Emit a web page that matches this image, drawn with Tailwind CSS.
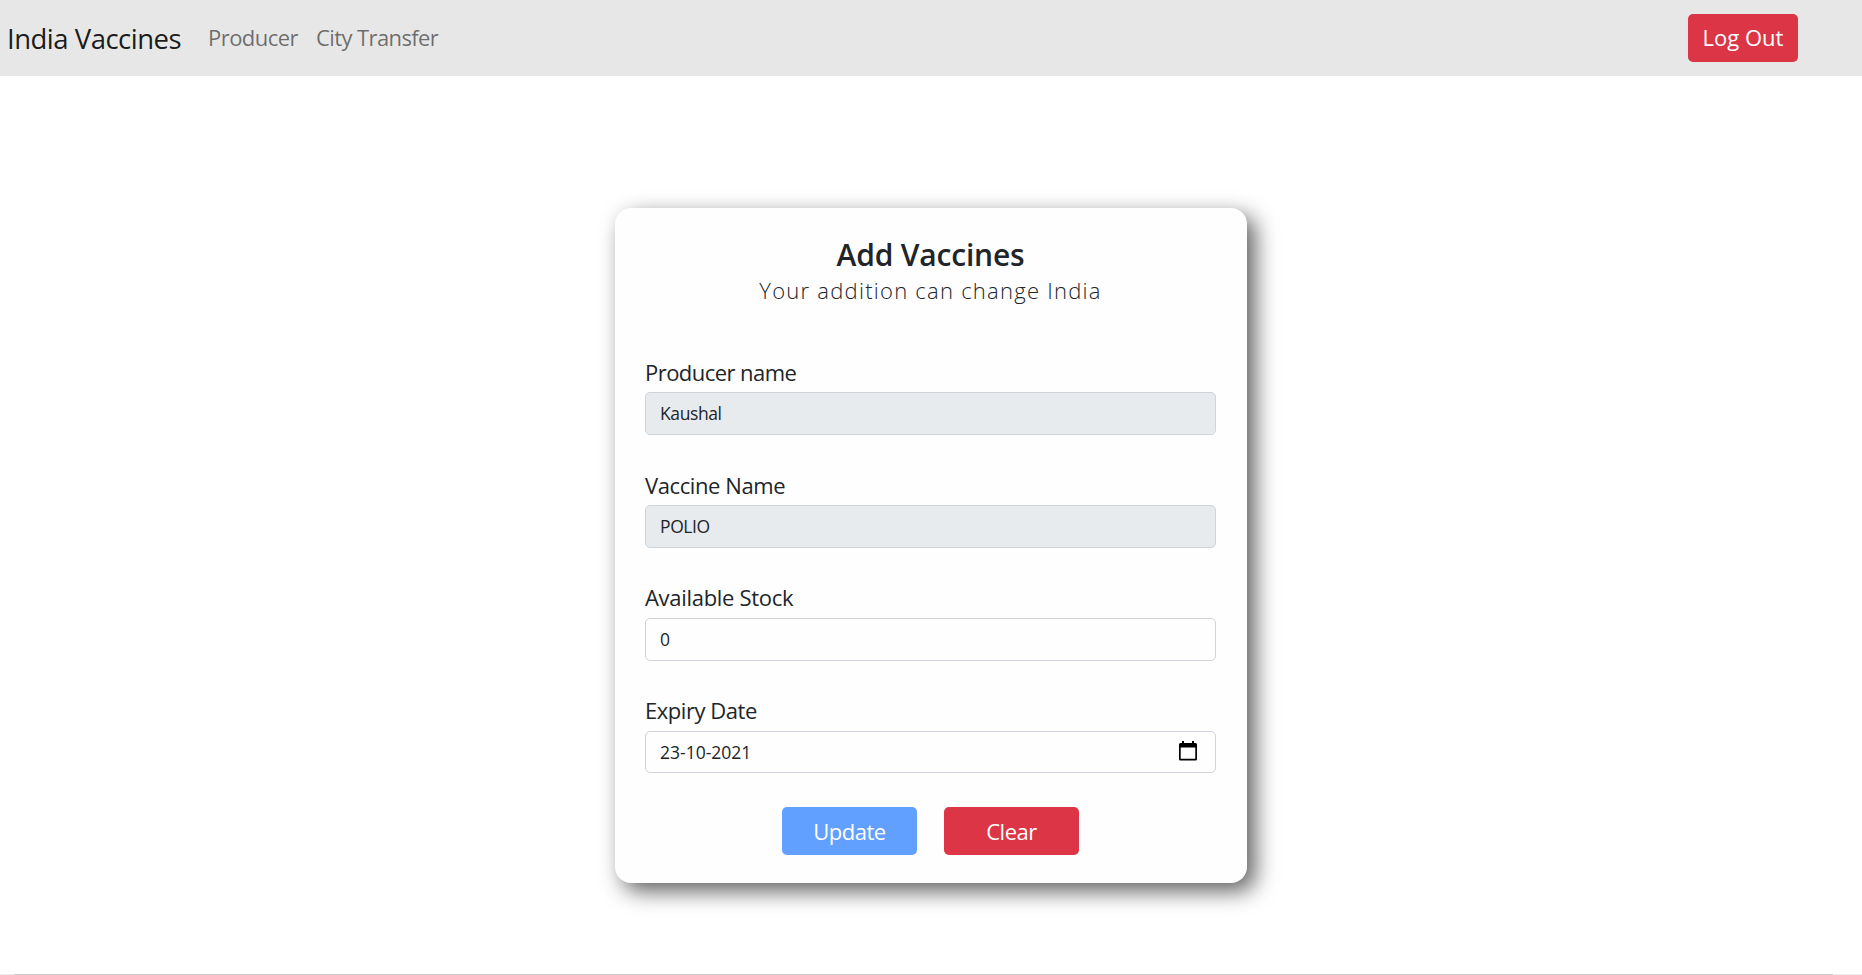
<!DOCTYPE html>
<html lang="en">
<head>
<meta charset="utf-8">
<title>India Vaccines</title>
<script src="https://cdn.jsdelivr.net/npm/@tailwindcss/browser@4"></script>
</head>
<body class="h-[975px] overflow-hidden bg-white font-['Open_Sans','Noto_Sans',sans-serif] text-[#212529] flex flex-col">
<nav class="h-[76px] shrink-0 bg-[#e7e7e7] flex items-center pl-[7px] pr-16">
  <a class="text-[27.5px] leading-10 text-black/90 tracking-[-0.5px] whitespace-nowrap w-[201px] pt-px">India Vaccines</a>
  <a class="text-[22px] tracking-[-0.55px] text-black/55 w-[108px] whitespace-nowrap pb-px">Producer</a>
  <a class="text-[22px] tracking-[-0.6px] text-black/55 whitespace-nowrap pb-px">City Transfer</a>
  <button class="ml-auto w-[110px] h-12 rounded-[5px] bg-[#dc3545] text-white text-[22px] whitespace-nowrap pb-px">Log Out</button>
</nav>
<main class="flex-1 flex flex-col items-center pt-[132px]">
  <form class="w-[632px] h-[675px] rounded-2xl bg-[#fefefe] shadow-[8px_8px_22px_rgba(0,0,0,0.63)] pl-[30px] pr-[31px] pt-7 flex flex-col">
    <h1 class="text-center text-[30px] leading-[38px] font-semibold tracking-[-0.2px]">Add Vaccines</h1>
    <p class="text-center text-[22px] leading-8 font-light tracking-[1.25px]">Your addition can change India</p>
    <div class="mt-[51px] flex flex-col gap-[35px]">
      <div class="h-[78px] flex flex-col justify-between"><label class="text-[22px] tracking-[-0.55px] leading-[31px]">Producer name</label><div class="h-[43px] rounded-[5px] border border-[#ced4da] bg-[#e8ebee] px-3.5 flex items-center text-[17.5px] tracking-[-0.4px]">Kaushal</div></div>
      <div class="h-[78px] flex flex-col justify-between"><label class="text-[22px] tracking-[-0.4px] leading-[31px]">Vaccine Name</label><div class="h-[43px] rounded-[5px] border border-[#ced4da] bg-[#e8ebee] px-3.5 flex items-center text-[17.5px] tracking-[-0.4px]">POLIO</div></div>
      <div class="h-[78px] flex flex-col justify-between"><label class="text-[22px] tracking-[-0.3px] leading-[29px]">Available Stock</label><div class="h-[43px] rounded-[5px] border border-[#ced4da] bg-[#fefefe] px-3.5 flex items-center text-[17.5px]">0</div></div>
      <div class="h-[77px] flex flex-col justify-between"><label class="text-[22px] tracking-[-0.45px] leading-[29px]">Expiry Date</label><div class="h-[42px] rounded-[5px] border border-[#ced4da] bg-[#fefefe] pl-3.5 pr-[18px] flex items-center justify-between text-[17.5px]"><span>23-10-2021</span>
        <svg class="w-[18px] h-5 -mt-0.5" viewBox="0 0 18 20"><path d="M3 0h2v2h8V0h2v2h1.500Q18 2 18 3.500V18Q18 19.500 16.500 19.500H1.500Q0 19.500 0 18V3.500Q0 2 1.500 2H3ZM1.700 6.500V17.800H16.300V6.500Z" fill="#000" fill-rule="evenodd"/></svg></div></div>
    </div>
    <div class="mt-[34px] flex justify-center gap-[27px]">
      <button class="w-[135px] h-12 rounded-[5px] bg-[#62a0ff] text-white text-[22px] tracking-[-0.5px] pt-px">Update</button>
      <button class="w-[135px] h-12 rounded-[5px] bg-[#dc3545] text-white text-[22px] tracking-[-0.5px] pt-px">Clear</button>
    </div>
  </form>
</main>
<div class="h-px shrink-0 bg-[#eeeeee] pl-3.5 pr-[29px]"><div class="h-px bg-[#cccccc]"></div></div>
</body>
</html>
